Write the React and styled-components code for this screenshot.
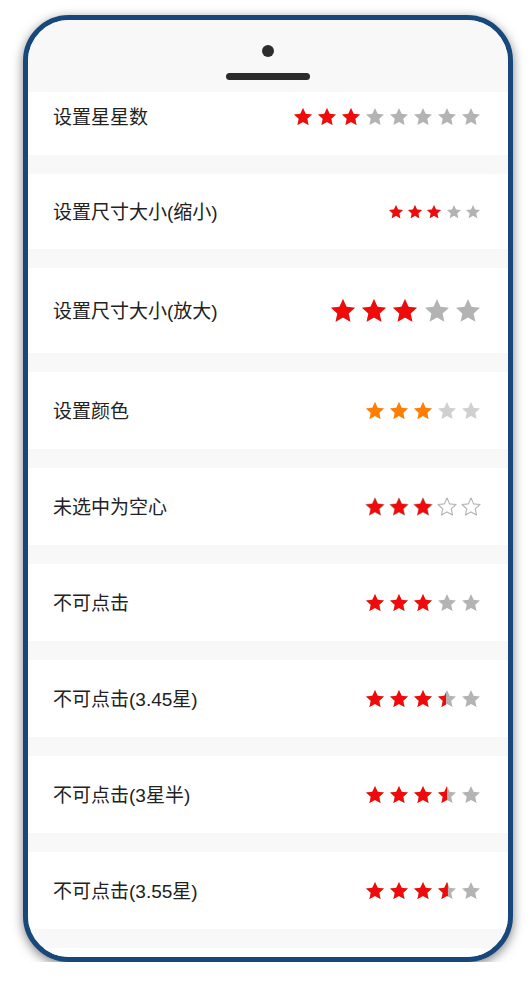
import React, { useId } from 'react';
import styled, { createGlobalStyle } from 'styled-components';

const GlobalStyle = createGlobalStyle`
  body {
    margin: 0;
    background: #fff;
    font-family: "Liberation Sans", "Noto Sans CJK SC", sans-serif;
  }
`;

const Phone = styled.div`
  box-sizing: border-box;
  width: 490px;
  height: 947px;
  margin: 15px 0 0 23px;
  border: 5px solid #17477b;
  border-radius: 46px;
  box-shadow: 0 3px 11px rgba(0, 0, 0, 0.5);
  background: #f8f8f8;
  overflow: hidden;
  display: flex;
  flex-direction: column;
`;

const StatusBar = styled.div`
  flex-shrink: 0;
  height: 72px;
  padding-top: 25px;
  box-sizing: border-box;
  display: flex;
  flex-direction: column;
  align-items: center;
  gap: 16px;
  background: #f8f8f8;
  position: relative;
  z-index: 1;
`;

const Camera = styled.div`
  width: 12px;
  height: 12px;
  border-radius: 50%;
  background: #2d2d2d;
`;

const Speaker = styled.div`
  width: 84px;
  height: 7px;
  border-radius: 4px;
  background: #2b2b2b;
`;

const Screen = styled.div`
  flex: 1;
  overflow: hidden;
`;

// list is scrolled a little, first row slides under the status bar
const List = styled.div`
  display: flex;
  flex-direction: column;
  gap: 19px;
  margin-top: -14px;

  /* top of the next (off-screen) row */
  &::after {
    content: '';
    height: 77px;
    background: #fff;
  }
`;

const Row = styled.div`
  display: flex;
  align-items: center;
  justify-content: space-between;
  padding: 28px 28px 28px 25px;
  background: #fff;
`;

const Label = styled.div`
  font-size: 19px;
  line-height: 21px;
  margin-bottom: -2px;
  color: #222;
`;

const Stars = styled.div`
  display: flex;
  align-items: center;
  gap: ${(p) => p.$gap}px;
  height: ${(p) => p.$h}px;
`;

const StarSvg = styled.svg`
  display: block;
  overflow: visible;
`;

const R = 10;
const r = 4.7;
const POINTS = Array.from({ length: 10 }, (_, i) => {
  const a = (Math.PI / 5) * i;
  const rad = i % 2 ? r : R;
  return `${(rad * Math.sin(a)).toFixed(3)},${(-rad * Math.cos(a)).toFixed(3)}`;
}).join(' ');

const Star = ({ size, fill, on, off, hollow }) => {
  const id = 'clip' + useId().replace(/[^a-zA-Z0-9_-]/g, '');
  const h = (size * 18.09) / 19.02;
  return (
    <StarSvg width={size} height={h} viewBox="-9.51 -10 19.02 18.09">
      <clipPath id={id}>
        <rect x="-9.51" y="-10" width={19.02 * fill} height="20" />
      </clipPath>
      <polygon
        points={POINTS}
        fill={hollow ? '#fff' : off}
        stroke={hollow ? off : 'none'}
        strokeWidth="1.2"
        strokeLinejoin="round"
      />
      {fill > 0 && <polygon points={POINTS} fill={on} clipPath={`url(#${id})`} />}
    </StarSvg>
  );
};

const Rate = ({ count = 5, value, size = 18, gap = 6, h = 21, on = '#f00a0a', off = '#b3b3b3', hollow }) => (
  <Stars $gap={gap} $h={h}>
    {Array.from({ length: count }, (_, i) => (
      <Star
        key={i}
        size={size}
        fill={Math.max(0, Math.min(1, value - i))}
        on={on}
        off={off}
        hollow={hollow}
      />
    ))}
  </Stars>
);

const items = [
  { label: '设置星星数', rate: { count: 8, value: 3 } },
  { label: '设置尺寸大小(缩小)', rate: { value: 3, size: 14, gap: 5.3, h: 14 } },
  { label: '设置尺寸大小(放大)', rate: { value: 3, size: 24, gap: 7.3, h: 29 } },
  { label: '设置颜色', rate: { value: 3, on: '#ff7d00', off: '#d0d0d0' } },
  { label: '未选中为空心', rate: { value: 3, hollow: true } },
  { label: '不可点击', rate: { value: 3 } },
  { label: '不可点击(3.45星)', rate: { value: 3.45 } },
  { label: '不可点击(3星半)', rate: { value: 3.5 } },
  { label: '不可点击(3.55星)', rate: { value: 3.55 } },
];

export default function App() {
  return (
    <>
      <GlobalStyle />
      <Phone>
        <StatusBar>
          <Camera />
          <Speaker />
        </StatusBar>
        <Screen>
          <List>
            {items.map((it) => (
              <Row key={it.label}>
                <Label>{it.label}</Label>
                <Rate {...it.rate} />
              </Row>
            ))}
          </List>
        </Screen>
      </Phone>
    </>
  );
}
